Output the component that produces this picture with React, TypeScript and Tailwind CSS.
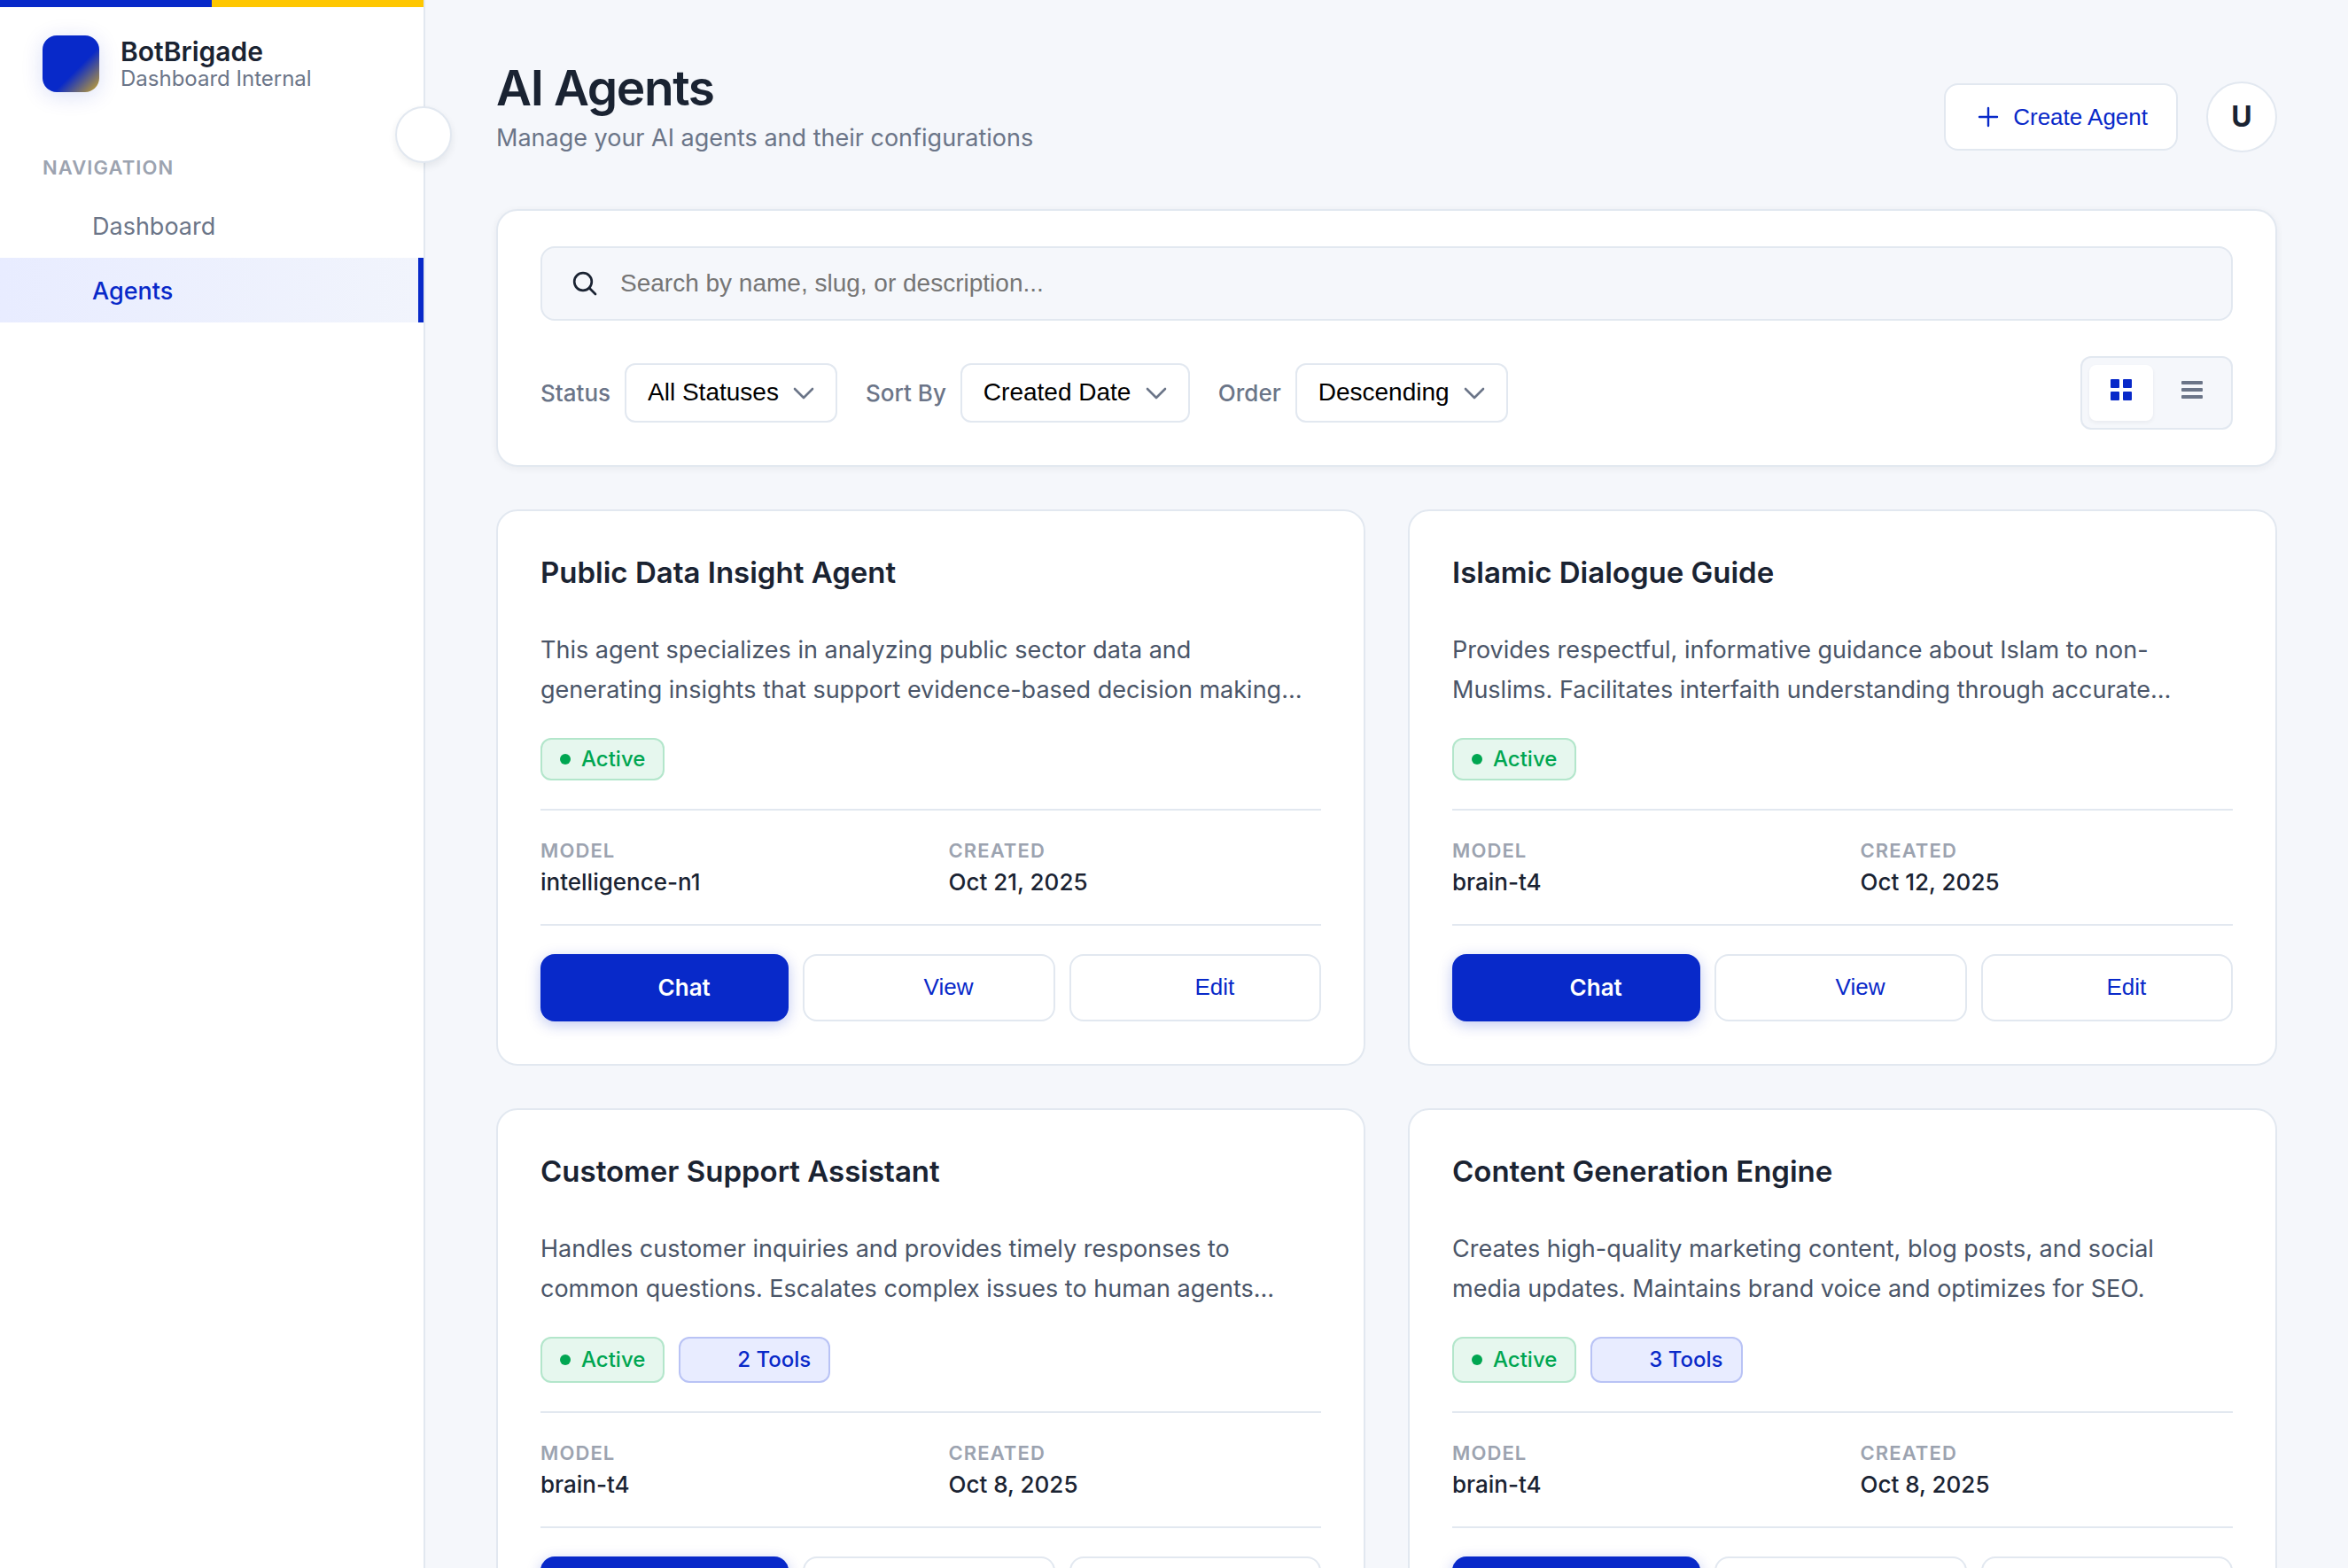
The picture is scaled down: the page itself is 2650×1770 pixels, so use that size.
import { useState } from "react";
import type { ReactNode } from "react";

type Agent = {
  name: string;
  description: string;
  tools?: number;
  model: string;
  created: string;
};

const agents: Agent[] = [
  {
    name: "Public Data Insight Agent",
    description:
      "This agent specializes in analyzing public sector data and generating insights that support evidence-based decision making…",
    model: "intelligence-n1",
    created: "Oct 21, 2025",
  },
  {
    name: "Islamic Dialogue Guide",
    description:
      "Provides respectful, informative guidance about Islam to non-Muslims. Facilitates interfaith understanding through accurate…",
    model: "brain-t4",
    created: "Oct 12, 2025",
  },
  {
    name: "Customer Support Assistant",
    description:
      "Handles customer inquiries and provides timely responses to common questions. Escalates complex issues to human agents…",
    tools: 2,
    model: "brain-t4",
    created: "Oct 8, 2025",
  },
  {
    name: "Content Generation Engine",
    description:
      "Creates high-quality marketing content, blog posts, and social media updates. Maintains brand voice and optimizes for SEO.",
    tools: 3,
    model: "brain-t4",
    created: "Oct 8, 2025",
  },
];

function Sidebar() {
  return (
    <aside className="relative z-10 flex w-[480px] shrink-0 flex-col border-r-2 border-[#e2e8f0] bg-white">
      <div className="flex h-2">
        <div className="flex-1 bg-[#0829c9]" />
        <div className="flex-1 bg-[#ffc700]" />
      </div>
      <div className="flex items-center gap-6 px-12 pt-8">
        <div className="size-16 rounded-2xl bg-[linear-gradient(135deg,#0829c9_60%,#ffc700_110%)] shadow-[0_4px_24px_rgba(8,41,201,0.15)]" />
        <div>
          <p className="text-[30px] leading-[34px] font-semibold text-[#1a2332]">BotBrigade</p>
          <p className="text-2xl leading-7 text-[#6b7588]">Dashboard Internal</p>
        </div>
      </div>
      <nav aria-labelledby="nav-title" className="mt-18">
        <h2 id="nav-title" className="mb-4 px-12 text-[22px] leading-[26px] font-semibold tracking-wider text-[#9ca3b0]">
          NAVIGATION
        </h2>
        <a href="#dashboard" className="block pt-[21px] pr-12 pb-[19px] pl-26 text-[27px] leading-[33px] text-[#6b7588]">
          Dashboard
        </a>
        <a
          href="#agents"
          aria-current="page"
          className="block border-r-6 border-[#0829c9] bg-linear-to-r from-[#e8ecff] to-[#f1f4fc] pt-[21px] pr-12 pb-[19px] pl-26 text-[27px] leading-[33px] font-medium text-[#0829c9]"
        >
          Agents
        </a>
      </nav>
      <button
        type="button"
        aria-label="Collapse sidebar"
        className="absolute top-30 -right-8 size-16 rounded-full border-2 border-[#e2e8f0] bg-white shadow-[0_4px_8px_rgba(26,35,50,0.08)]"
      />
    </aside>
  );
}

function Filter({ id, label, options, width }: { id: string; label: string; options: string[]; width: string }) {
  return (
    <div className="flex items-center gap-4">
      <label htmlFor={id} className="text-[26px] leading-8 font-medium text-[#6b7588]">
        {label}
      </label>
      <div className={`grid items-center ${width}`}>
        <select
          id={id}
          className="col-start-1 row-start-1 h-[67px] w-full appearance-none rounded-xl border-2 border-[#e2e8f0] bg-white pr-16 pb-0.5 pl-6 font-['Liberation_Sans',Arial,sans-serif] text-[28px] text-black"
        >
          {options.map((o) => (
            <option key={o}>{o}</option>
          ))}
        </select>
        <svg
          viewBox="0 0 24 14"
          className="pointer-events-none col-start-1 row-start-1 mr-[26px] h-[14px] w-6 justify-self-end"
          fill="none"
          stroke="#6b7588"
          strokeWidth="2.6"
          strokeLinecap="round"
          strokeLinejoin="round"
        >
          <path d="M2 2l10 10L22 2" />
        </svg>
      </div>
    </div>
  );
}

function FilterPanel() {
  const [view, setView] = useState<"grid" | "list">("grid");
  return (
    <section className="rounded-3xl border-2 border-[#e2e8f0] bg-white px-12 py-10 shadow-[0_2px_8px_rgba(26,35,50,0.06)]">
      <div className="flex h-[84px] items-center gap-6 rounded-2xl border-2 border-[#e2e8f0] bg-[#f5f7fb] px-8">
        <svg viewBox="0 0 32 32" className="size-8 shrink-0" fill="none" stroke="#1a2332" strokeWidth="2.7" strokeLinecap="round">
          <circle cx="14" cy="14" r="9.8" />
          <path d="M21 21l7 7" />
        </svg>
        <input
          type="text"
          aria-label="Search agents"
          placeholder="Search by name, slug, or description..."
          className="min-w-0 flex-1 bg-transparent font-['Liberation_Sans',Arial,sans-serif] text-[28px] leading-8 text-[#1a2332] outline-none placeholder:text-[#757575]"
        />
      </div>
      <div className="mt-10 flex items-center justify-between">
        <div className="flex items-center gap-8">
          <Filter id="status" label="Status" options={["All Statuses", "Active", "Inactive"]} width="w-[240px]" />
          <Filter id="sort" label="Sort By" options={["Created Date", "Name"]} width="w-[259px]" />
          <Filter id="order" label="Order" options={["Descending", "Ascending"]} width="w-[240px]" />
        </div>
        <div className="flex gap-2 rounded-xl border-2 border-[#e2e8f0] bg-[#f5f7fb] p-2">
          <button
            type="button"
            aria-label="Grid view"
            aria-pressed={view === "grid"}
            onClick={() => setView("grid")}
            className={`flex h-[63px] items-start rounded-lg px-6 pt-4 ${view === "grid" ? "bg-white text-[#0829c9] shadow-[0_2px_4px_rgba(26,35,50,0.06)]" : "text-[#6b7588]"}`}
          >
            <svg viewBox="0 0 24 24" className="size-6" fill="currentColor">
              <rect width="10" height="10" rx="1" />
              <rect x="14" width="10" height="10" rx="1" />
              <rect y="14" width="10" height="10" rx="1" />
              <rect x="14" y="14" width="10" height="10" rx="1" />
            </svg>
          </button>
          <button
            type="button"
            aria-label="List view"
            aria-pressed={view === "list"}
            onClick={() => setView("list")}
            className={`flex h-[63px] items-start rounded-lg px-6 pt-4 ${view === "list" ? "bg-white text-[#0829c9] shadow-[0_2px_4px_rgba(26,35,50,0.06)]" : "text-[#6b7588]"}`}
          >
            <svg viewBox="0 0 24 24" className="size-6" fill="currentColor">
              <rect y="2" width="24" height="4" rx="1" />
              <rect y="10" width="24" height="4" rx="1" />
              <rect y="18" width="24" height="4" rx="1" />
            </svg>
          </button>
        </div>
      </div>
    </section>
  );
}

function OutlineButton({ children }: { children: ReactNode }) {
  return (
    <button
      type="button"
      className="h-[76px] flex-1 rounded-2xl border-2 border-[#e2e8f0] bg-white pb-0.5 pl-11 font-['Liberation_Sans',Arial,sans-serif] text-[26px] leading-[30px] text-[#0829c9]"
    >
      {children}
    </button>
  );
}

function AgentCard({ agent }: { agent: Agent }) {
  return (
    <article className="rounded-3xl border-2 border-[#e2e8f0] bg-white p-12">
      <h2 className="text-[33px] leading-[42px] font-semibold text-[#1a2332]">{agent.name}</h2>
      <p className="mt-11 line-clamp-2 pr-2.5 text-[27px] leading-[45px] text-[#4a5568]">{agent.description}</p>
      <div className="mt-8 flex gap-4">
        <span className="flex items-center gap-3 rounded-xl border-2 border-[#b3e6cb] bg-[#e6f7ee] px-5 py-2 text-2xl leading-7 font-medium text-[#00a651]">
          <span className="size-3 rounded-full bg-[#00a651]" />
          Active
        </span>
        {agent.tools && (
          <span className="rounded-xl border-2 border-[#b9c3f5] bg-[#e8ecff] py-[10px] pr-5 pl-16 text-2xl leading-7 font-medium text-[#0829c9]">
            {agent.tools} Tools
          </span>
        )}
      </div>
      <dl className="mt-8 grid grid-cols-2 gap-10 border-y-2 border-[#e2e8f0] py-8">
        <div>
          <dt className="text-[22px] leading-[26px] font-semibold tracking-wider text-[#9ca3b0]">MODEL</dt>
          <dd className="mt-2 text-[26px] leading-[30px] font-medium text-[#1a2332]">{agent.model}</dd>
        </div>
        <div>
          <dt className="text-[22px] leading-[26px] font-semibold tracking-wider text-[#9ca3b0]">CREATED</dt>
          <dd className="mt-2 text-[26px] leading-[30px] font-medium text-[#1a2332]">{agent.created}</dd>
        </div>
      </dl>
      <div className="mt-8 flex gap-4">
        <button
          type="button"
          className="h-[76px] flex-1 rounded-2xl bg-[#0829c9] pl-11 text-[26px] leading-[30px] font-semibold text-white shadow-[0_4px_16px_rgba(8,41,201,0.25)]"
        >
          Chat
        </button>
        <OutlineButton>View</OutlineButton>
        <OutlineButton>Edit</OutlineButton>
      </div>
    </article>
  );
}

export default function App() {
  return (
    <div className="flex h-screen overflow-hidden bg-[#f5f7fb] font-[Inter,sans-serif]">
      <Sidebar />
      <main className="min-w-0 flex-1 overflow-y-auto px-20 pt-[65px] pb-20 [scrollbar-width:none]">
        <header className="mb-16 flex items-end justify-between">
          <div>
            <h1 className="text-[55px] leading-[68px] font-semibold tracking-tight text-[#1a2332]">AI Agents</h1>
            <p className="mt-[7px] text-[27px] leading-8 text-[#6b7588]">Manage your AI agents and their configurations</p>
          </div>
          <div className="flex items-center gap-8">
            <button
              type="button"
              className="flex h-[76px] items-center gap-3 rounded-2xl border-2 border-[#e2e8f0] bg-white px-8 font-['Liberation_Sans',Arial,sans-serif] text-[26px] leading-[30px] text-[#0829c9]"
            >
              <svg viewBox="0 0 32 32" className="size-8" fill="none" stroke="currentColor" strokeWidth="2.4" strokeLinecap="round">
                <path d="M16 6v20M6 16h20" />
              </svg>
              Create Agent
            </button>
            <button
              type="button"
              aria-label="User menu"
              className="size-20 rounded-full border-2 border-[#e2e8f0] bg-white text-[32px] font-bold text-[#1a2332]"
            >
              U
            </button>
          </div>
        </header>
        <FilterPanel />
        <div className="mt-12 grid grid-cols-2 gap-12">
          {agents.map((agent) => (
            <AgentCard key={agent.name} agent={agent} />
          ))}
        </div>
      </main>
    </div>
  );
}
